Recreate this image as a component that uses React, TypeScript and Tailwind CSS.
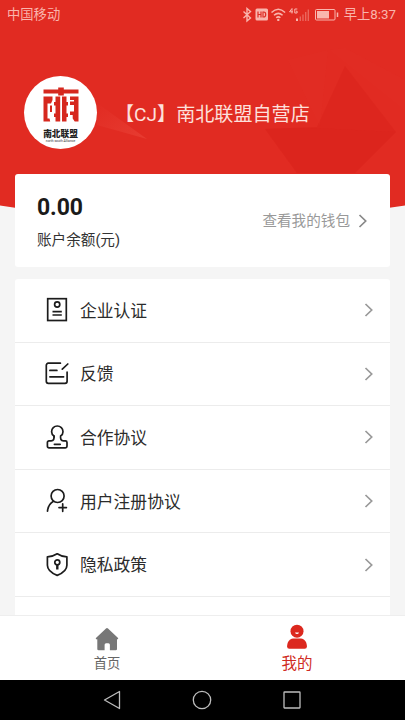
import React from 'react';

function Chevron({ className }: { className?: string }) {
  return (
    <svg viewBox="0 0 10 16" fill="none" stroke="currentColor" strokeWidth="1.7" className={`h-4 w-2.5 ${className ?? ''}`}>
      <path d="M1.5 2l6.2 6-6.2 6" />
    </svg>
  );
}

const CertIcon = () => (
  <svg viewBox="0 0 24 26" className="h-[26px] w-6" fill="none" stroke="#1c1c1c" strokeWidth="1.7">
    <rect x="2.7" y="1.7" width="18.6" height="21.8" />
    <circle cx="12.2" cy="7.5" r="2.6" />
    <path d="M7.5 14.7h9.3M7.5 18h9.3" />
  </svg>
);

const FeedbackIcon = () => (
  <svg viewBox="0 0 24 26" className="h-[26px] w-6" fill="none" stroke="#1c1c1c" strokeWidth="1.7" strokeLinecap="round">
    <path d="M15.4 2.2H3.3a2 2 0 0 0-2 2v16.1a2 2 0 0 0 2 2h16.8a2 2 0 0 0 2-2v-9.1" />
    <path d="M17.3 8.2l5.5-5.2M4.9 9.4h7M4.9 15.8h13.7" />
  </svg>
);

const StampIcon = () => (
  <svg viewBox="0 0 24 26" className="h-[26px] w-6" fill="none" stroke="#1c1c1c" strokeWidth="1.7" strokeLinecap="round" strokeLinejoin="round">
    <path d="M9 12C7.500 11 6.600 9.600 6.600 7.700a5.700 5.700 0 0 1 11.400 0c0 1.900-.9 3.300-2.400 4.300-.3 3 .3 4.700 2.900 4.900h1.900a1.600 1.600 0 0 1 1.600 1.600v3.700a1.600 1.600 0 0 1-1.600 1.600H4a1.600 1.600 0 0 1-1.600-1.600v-3.700A1.600 1.600 0 0 1 4 16.900h2.100C8.700 16.700 9.300 15 9 12z" />
    <path d="M9.400 20.300h5.800" />
    <path d="M9 12q.1.500.1.900" stroke="#1c1c1c" />
  </svg>
);

const UserAddIcon = () => (
  <svg viewBox="0 0 24 26" className="h-[26px] w-6" fill="none" stroke="#1c1c1c" strokeWidth="1.7" strokeLinecap="round">
    <circle cx="12.6" cy="8" r="6.5" />
    <path d="M8.500 13.300c-3.600 2-5.600 5.500-6 9.800M14 19.600h7.400M17.700 15.900v7.400" />
  </svg>
);

const ShieldIcon = () => (
  <svg viewBox="0 0 24 26" className="h-[26px] w-6" fill="none" stroke="#1c1c1c" strokeWidth="1.7" strokeLinejoin="round">
    <path d="M12.200 1.800c2.900 2 5.900 2.900 9.700 3v8.500c0 4.400-4.400 8-9.700 10.100-5.300-2.100-9.800-5.700-9.800-10.100V4.800c3.800-.1 6.800-1 9.800-3z" />
    <circle cx="12.300" cy="10.300" r="2.500" />
    <path d="M12.300 12.800v4.700" strokeWidth="2.400" />
  </svg>
);

const menu = [
  { label: '企业认证', Icon: CertIcon },
  { label: '反馈', Icon: FeedbackIcon },
  { label: '合作协议', Icon: StampIcon },
  { label: '用户注册协议', Icon: UserAddIcon },
  { label: '隐私政策', Icon: ShieldIcon },
];

// Red backdrop with faint facets and a curved lower edge
function Backdrop() {
  return (
    <svg viewBox="0 0 405 240" className="absolute left-0 top-0 h-[240px] w-full">
      <defs>
        <linearGradient id="ray" x1="0" y1="0" x2="1" y2="1">
          <stop offset="0" stopColor="#e12b22" />
          <stop offset="1" stopColor="#ea4338" />
        </linearGradient>
      </defs>
      <path d="M0 0h405v205.500Q202 238 0 205.500z" fill="#e12b22" />
      <path d="M97 103l50 36-50-14z" fill="url(#ray)" opacity=".7" />
      <path d="M345 66l51 66-41 41h-58l-32-44 52-2z" fill="#d6211a" opacity=".4" />
      <path d="M265 129l50-1 81 4-41 41h-58z" fill="#d6211a" opacity=".15" />
      <path d="M330 50l75 60v-30l-60-32z" fill="#e6372d" opacity=".15" />
      <path d="M288 60l40-10-8 76z" fill="#e6372d" opacity=".15" />
    </svg>
  );
}

function StatusBar() {
  return (
    <div className="flex h-7 items-center justify-between pl-[7px] pr-[9px] pt-px text-[13.3px] leading-none text-[#f9b5ad]">
      <span>中国移动</span>
      <div className="flex items-center">
        <svg viewBox="0 0 98 16" className="mr-[5px] h-4 w-[98px]" fill="none" stroke="currentColor">
          <path d="M2.500 4.500l7 6.500-3.500 3V1.500l3.500 3-7 6.500" strokeWidth="1.4" />
          <rect x="14.500" y="1.500" width="12.500" height="12" rx="1.500" fill="currentColor" stroke="none" />
          <path d="M17 4.500v6M20 4.500v6M17 7.500h3M22 5v5h.8q1.900 0 1.900-2.500T22.800 5z" stroke="#dd2c24" strokeWidth="1.2" />
          <path d="M30.500 5.500q6.800-6.500 13.600 0M33 8.300q4.300-3.800 8.600 0M35.200 10.800q2.100-1.800 4.200 0" strokeWidth="1.5" />
          <circle cx="37.300" cy="12.900" r="1.200" fill="currentColor" stroke="none" />
          <path d="M51 6.500v-5l-2.500 3.300H52M56.300 2h-2.500v4h2.300V4.200h-1" strokeWidth="1" />
          <path d="M56 11.500V14" strokeWidth="2" />
          <path d="M59.300 9.500V14M62 7.500V14M64.700 5V14M67.300 2.500V14" strokeWidth="1.3" opacity=".45" />
          <rect x="74.500" y="2.500" width="19.500" height="10.500" rx="1" strokeWidth="1" />
          <path d="M76 4h12v7.500H76z" fill="currentColor" stroke="none" />
          <path d="M96.500 5.500V10" strokeWidth="1.5" />
        </svg>
        <span>早上8:37</span>
      </div>
    </div>
  );
}

function StoreLogo() {
  return (
    <div className="flex h-[73px] w-[73px] flex-col items-center rounded-full bg-white pt-[11px]">
      <svg viewBox="0 0 36 36" className="h-9 w-9 shrink-0" fill="#d6281e">
        <path d="M.5 2.500h14.700V.5h5.600v2h14.700v4H20.800v2h-5.600v-2H.5z" />
        <path d="M.5 9.500h9V13L8 16.500H4.500v15h2l.7 3H.5z" />
        <path d="M7 18.500h2V25H7z" />
        <path d="M12.500 9.500h4.700v25h-4.700v-4.500H11v-3.500h1.500V18.500H11V15h1.500z" />
        <path d="M19 9.500h4.500V15H25v3.500h-1.500v8H25V30h-1.500v4.500H19z" />
        <path d="M27 9.500h8.500v25h-3.800l-2-3V28H27v-3.500h4V18h-4v-3.500h4V13h-4z" />
      </svg>
      <span className="mt-[6px] whitespace-nowrap text-[8.7px] font-black leading-[10px] text-[#222]">南北联盟</span>
      <span className="h-[4px] whitespace-nowrap text-[3.3px] leading-[4px] text-[#333]">north south Alliance</span>
    </div>
  );
}

function TabBar() {
  return (
    <nav className="grid h-[65px] shrink-0 grid-cols-[214px_1fr] border-t border-[#eeeeee] bg-white">
      <div className="flex flex-col items-center pt-[11px] text-[#666]">
        <svg viewBox="0 0 24 24" className="h-6 w-6" fill="#777">
          <path d="M12 1a1.400 1.400 0 0 1 1 .4l9.800 9.300c.8.800.3 1.500-.5 1.500H22v9.800a1.300 1.300 0 0 1-1.300 1.300h-5.800v-5.500q0-1.500-1.500-1.500h-2.300q-1.500 0-1.500 1.500v5.500H3.600A1.300 1.300 0 0 1 2.300 22v-9.800h-.6c-.9 0-1.300-.7-.5-1.500L11 1.400A1.400 1.400 0 0 1 12 1z" />
        </svg>
        <span className="mt-[5px] text-[13.3px] leading-[16px]">首页</span>
      </div>
      <div className="flex flex-col items-center pr-[25px] pt-[8px] text-[#cf2b23]">
        <svg viewBox="0 0 22 26" className="h-[26px] w-[22px]" fill="#dc281e">
          <circle cx="11" cy="7.200" r="6.500" />
          <path d="M7 14.500h8c3.500 0 5.900 3.700 5.900 8.100a2.200 2.200 0 0 1-2.200 2.200H3.300a2.200 2.200 0 0 1-2.200-2.200c0-4.400 2.400-8.100 5.900-8.100z" />
          <path d="M9 8.500h4q-.5 1.600-2 1.600T9 8.500z" fill="#fff" />
        </svg>
        <span className="mt-[4px] text-[15.5px] leading-[20px]">我的</span>
      </div>
    </nav>
  );
}

function SystemBar() {
  return (
    <div className="flex h-10 shrink-0 items-center justify-center gap-[70px] bg-black pr-[1px]">
      <svg viewBox="0 0 20 20" className="h-5 w-5" fill="none" stroke="#bdbdbd" strokeWidth="1.3" strokeLinejoin="round">
        <path d="M17.500 1.500v17L2.500 10z" />
      </svg>
      <svg viewBox="0 0 20 20" className="h-5 w-5" fill="none" stroke="#bdbdbd" strokeWidth="1.3">
        <circle cx="10" cy="10" r="8.700" />
      </svg>
      <svg viewBox="0 0 20 20" className="h-5 w-5" fill="none" stroke="#bdbdbd" strokeWidth="1.3">
        <rect x="2" y="2" width="16" height="16" rx=".5" />
      </svg>
    </div>
  );
}

export default function App() {
  return (
    <div className="relative flex h-[720px] w-[405px] flex-col overflow-hidden bg-[#f5f5f5] font-['Roboto','Noto_Sans_CJK_SC',sans-serif]">
      <Backdrop />
      <div className="relative flex min-h-0 flex-1 flex-col">
        <StatusBar />
        <header className="flex h-[146px] shrink-0 items-start pl-[24px] pt-[48px]">
          <StoreLogo />
          <h1 className="ml-[18px] mt-[25px] whitespace-nowrap text-[19.1px] leading-[28px] text-[#fde0dc]">【CJ】南北联盟自营店</h1>
        </header>

        <section className="mx-[15px] flex h-[93px] shrink-0 items-center justify-between rounded-[3px] bg-white pl-[22px] pr-[22px]">
          <div className="pt-[3px]">
            <div className="text-[23px] font-bold leading-[28px] tracking-[-0.1px] text-[#1a1a1a]">0.00</div>
            <div className="mt-[7px] text-[14.6px] leading-[22px] text-[#333]">账户余额(元)</div>
          </div>
          <div className="flex items-center text-[14.6px] leading-[22px] text-[#999]">
            <span className="pt-px">查看我的钱包</span>
            <Chevron className="ml-[8px] text-[#888]" />
          </div>
        </section>

        <section className="mx-[15px] mt-[12px] min-h-0 flex-1 overflow-hidden rounded-t-[3px] bg-white">
          {menu.map(({ label, Icon }) => (
            <div key={label} className="flex h-[63.6px] items-center border-b border-[#ececec] pl-[30px] pr-[16px]">
              <Icon />
              <span className="ml-[11px] pt-px text-[16.8px] leading-6 text-[#2b2b2b]">{label}</span>
              <Chevron className="ml-auto text-[#999]" />
            </div>
          ))}
        </section>
      </div>
      <TabBar />
      <SystemBar />
    </div>
  );
}
